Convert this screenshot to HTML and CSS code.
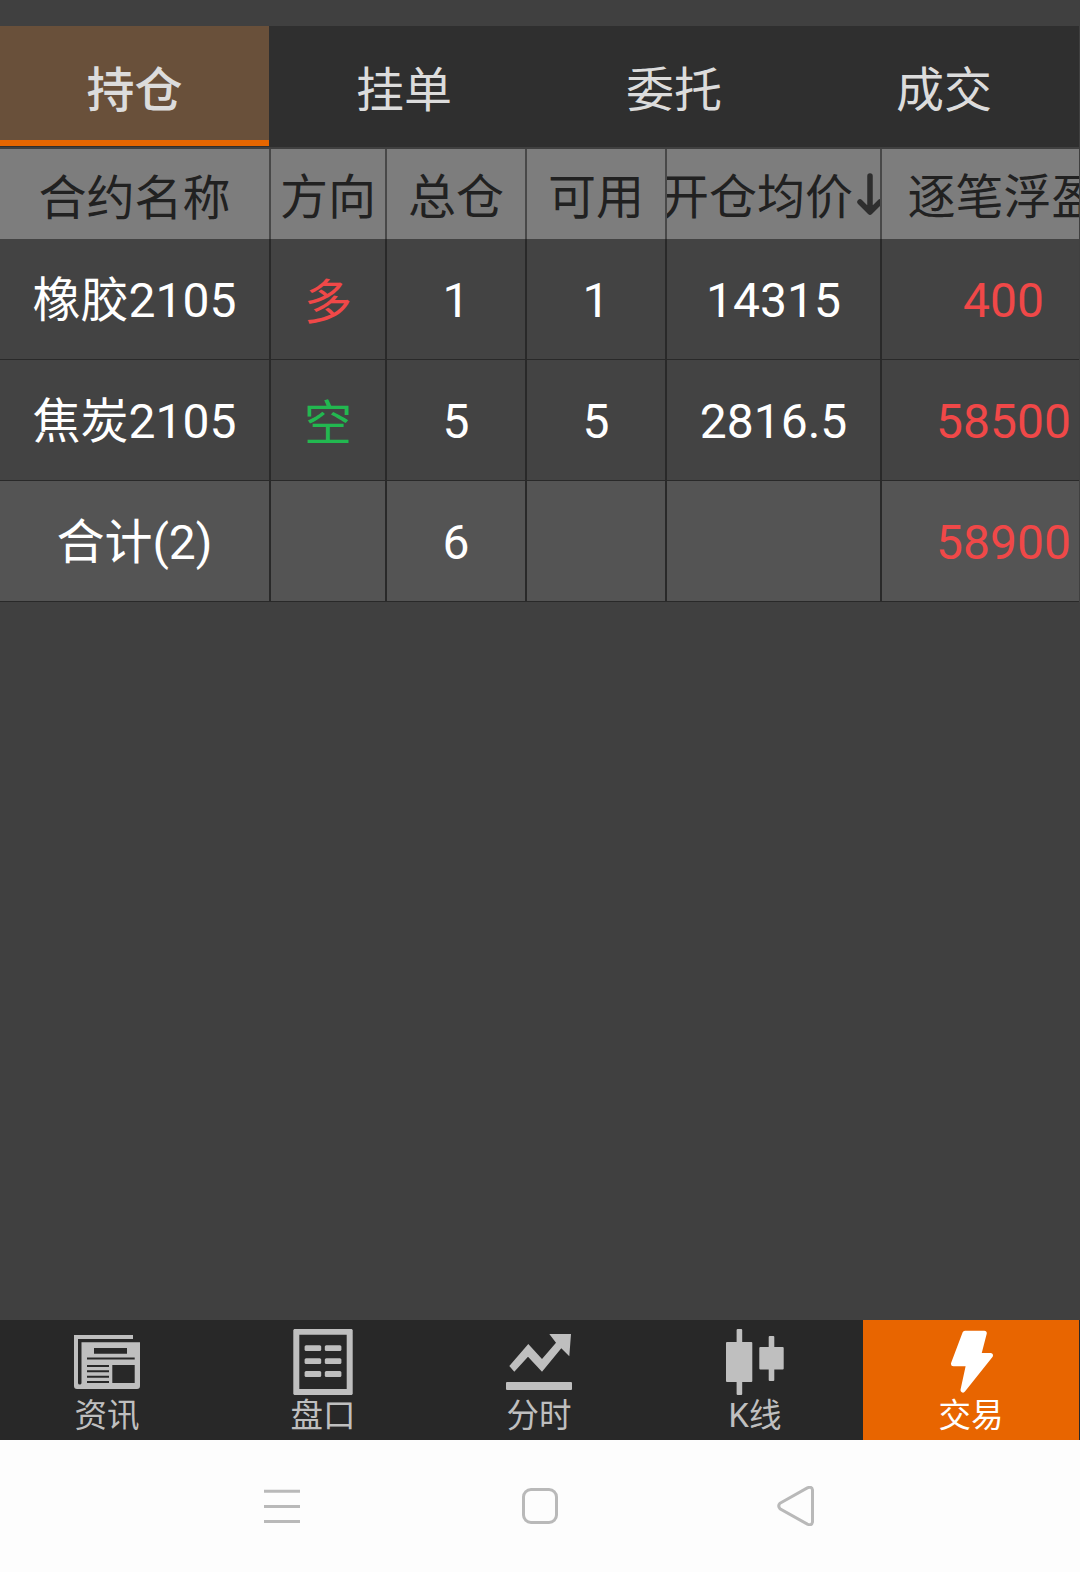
FILE: index.html
```
<!DOCTYPE html>
<html lang="zh-CN">
<head>
    <meta charset="UTF-8">
    <meta name="viewport" content="width=device-width, initial-scale=1.0">
    <title>持仓</title>
    <link rel="stylesheet" href="styles.css">
</head>
<body>
    <div class="app">
        <div class="tabs">
            <div class="tab active">持仓</div>
            <div class="tab">挂单</div>
            <div class="tab">委托</div>
            <div class="tab">成交</div>
        </div>

        <div class="table">
            <div class="row head">
                <div class="cell name">合约名称</div>
                <div class="cell">方向</div>
                <div class="cell">总仓</div>
                <div class="cell">可用</div>
                <div class="cell">
                    <span>开仓均价</span>
                    <svg class="sort" viewBox="0 0 33 44">
                        <path d="M17 4V39M7 30L17 40L27 30" />
                    </svg>
                </div>
                <div class="cell">逐笔浮盈</div>
            </div>
            <div class="row">
                <div class="cell">橡胶2105</div>
                <div class="cell side red">多</div>
                <div class="cell">1</div>
                <div class="cell">1</div>
                <div class="cell">14315</div>
                <div class="cell red">400</div>
            </div>
            <div class="row">
                <div class="cell">焦炭2105</div>
                <div class="cell side green">空</div>
                <div class="cell">5</div>
                <div class="cell">5</div>
                <div class="cell">2816.5</div>
                <div class="cell red">58500</div>
            </div>
            <div class="row total">
                <div class="cell">合计(2)</div>
                <div class="cell"></div>
                <div class="cell">6</div>
                <div class="cell"></div>
                <div class="cell"></div>
                <div class="cell red">58900</div>
            </div>
        </div>

        <div class="nav">
            <div class="nav-item">
                <svg viewBox="0 0 66 66">
                    <path fill-rule="evenodd" d="M0 6H59V10H4V54Q4 55.5 5.7 55.5Q7.5 55.5 7.5 54V13.3H66V57Q66 60 63 60H3Q0 60 0 57ZM20 19V24.7H53V19ZM13 28.5V30.5H60.7V28.5ZM13 36V38H35V36ZM13 41.2V43.2H35V41.2ZM13 46.8V48.8H35V46.8ZM13 52V54H35V52ZM38.3 36V54H60.7V36Z" />
                </svg>
                <span>资讯</span>
            </div>
            <div class="nav-item">
                <svg viewBox="0 0 66 66">
                    <path fill-rule="evenodd" d="M4.3 0H61.7L62.7 1V65L61.7 66H4.3L3.3 65V1ZM9.3 5.7V60H56.7V5.7Z" />
                    <rect x="14.6" y="16.3" width="16.6" height="5.8" rx="1.5" />
                    <rect x="34.8" y="16.3" width="16.6" height="5.8" rx="1.5" />
                    <rect x="14.6" y="29.2" width="16.6" height="5.8" rx="1.5" />
                    <rect x="34.8" y="29.2" width="16.6" height="5.8" rx="1.5" />
                    <rect x="14.6" y="42.1" width="16.6" height="5.8" rx="1.5" />
                    <rect x="34.8" y="42.1" width="16.6" height="5.8" rx="1.5" />
                </svg>
                <span>盘口</span>
            </div>
            <div class="nav-item">
                <svg viewBox="0 0 66 66">
                    <path d="M3.3 37L22.3 15L36 30L50 13.7L43.3 5H65L63.3 27.3L55.3 19.3L36 42.7L22 27.7L8.3 42.7Z" />
                    <rect x="0" y="53" width="66" height="8" rx="1" />
                </svg>
                <span>分时</span>
            </div>
            <div class="nav-item">
                <svg viewBox="0 0 66 66">
                    <rect x="14.6" y="0" width="5.6" height="66" rx="1" />
                    <rect x="4" y="13" width="26.3" height="40" rx="1" />
                    <rect x="46.7" y="7" width="5.6" height="45" rx="1" />
                    <rect x="37.3" y="18" width="24.4" height="22.5" rx="1" />
                </svg>
                <span>K线</span>
            </div>
            <div class="nav-item active">
                <svg viewBox="0 0 66 66">
                    <path class="bolt" d="M27 4.2H46.3L40.5 26.5H52.5L25 61L30.7 34.7H15.5Z" />
                </svg>
                <span>交易</span>
            </div>
        </div>

        <div class="sysbar">
            <svg viewBox="0 0 40 40">
                <path d="M1 5.3H37M1 20.5H37M1 35.5H37" />
            </svg>
            <svg viewBox="0 0 40 40">
                <rect x="3.5" y="3.5" width="33" height="33" rx="7.5" />
            </svg>
            <svg viewBox="0 0 40 40">
                <path d="M3 17.3L30.3 1.9Q34.8 0 35.5 4V36Q34.8 40 30.3 38.1L3 22.7Q0.5 20 3 17.3Z" />
            </svg>
        </div>
    </div>
</body>
</html>
```
FILE: styles.css
```
* {
    box-sizing: border-box;
}

body {
    margin: 0;
    background: #404040;
    font-family: Roboto, "Noto Sans CJK SC", sans-serif;
}

.app {
    width: 1080px;
    height: 1572px;
    padding-top: 26px;
    display: flex;
    flex-direction: column;
    overflow: hidden;
}

.tabs {
    width: 1079px;
    height: 121px;
    display: grid;
    grid-template-columns: 269px repeat(3, 270px);
    background: #2f2f2f;
    margin-bottom: 2px;
}

.tab {
    height: 120px;
    display: flex;
    align-items: center;
    justify-content: center;
    font-size: 48px;
    line-height: 56px;
    color: #dcdcdc;
    padding-top: 9px;
}

.tab.active {
    background: #69503a;
    border-bottom: 6px solid #e66600;
    font-weight: 500;
    padding-top: 15px;
}

.table {
    width: 1079px;
    overflow: hidden;
}

.row {
    width: 1125px;
    height: 121px;
    display: grid;
    grid-template-columns: 271px 116px 140px 140px 215px 243px;
    background: #434343;
    border-bottom: 1px solid #292929;
    color: #fff;
    font-size: 48px;
    line-height: 56px;
}

.cell {
    display: flex;
    align-items: center;
    justify-content: center;
    border-right: 2px solid #292929;
    overflow: hidden;
    white-space: nowrap;
    padding-top: 4px;
}

.cell:last-child {
    border-right: none;
}

.side {
    padding-top: 7px;
}

.head {
    height: 90px;
    background: #7d7d7d;
    color: #212121;
    border-bottom: none;
}

.head .cell {
    border-color: #484848;
    padding-top: 8px;
}

.head .name {
    padding-top: 10px;
}

.head .cell span,
.sort {
    flex-shrink: 0;
}

.sort {
    width: 33px;
    height: 44px;
    margin-bottom: 8px;
    fill: none;
    stroke: #2e2e2e;
    stroke-width: 5.5;
    stroke-linecap: round;
    stroke-linejoin: round;
}

.total {
    background: #545454;
}

.red {
    color: #f04848;
}

.green {
    color: #22b850;
}

.nav {
    height: 120px;
    margin-top: auto;
    display: grid;
    grid-template-columns: 215px repeat(4, 216px);
    background: #282828;
    color: #bfbfbf;
    font-size: 32.5px;
}

.nav-item {
    display: flex;
    flex-direction: column;
    align-items: center;
    padding-top: 9px;
}

.nav-item:first-child {
    padding-right: 1px;
}

.nav-item svg {
    width: 66px;
    height: 66px;
    fill: currentColor;
}

.nav-item span {
    line-height: 42px;
}

.nav-item.active {
    background: #e86500;
    color: #fff;
}

.bolt {
    stroke: currentColor;
    stroke-width: 5;
    stroke-linejoin: round;
}

.sysbar {
    height: 132px;
    display: flex;
    align-items: center;
    justify-content: center;
    gap: 217px;
    background: #fdfdfd;
}

.sysbar svg {
    width: 40px;
    height: 40px;
    fill: none;
    stroke: #b9b9b9;
    stroke-width: 3;
}
```
